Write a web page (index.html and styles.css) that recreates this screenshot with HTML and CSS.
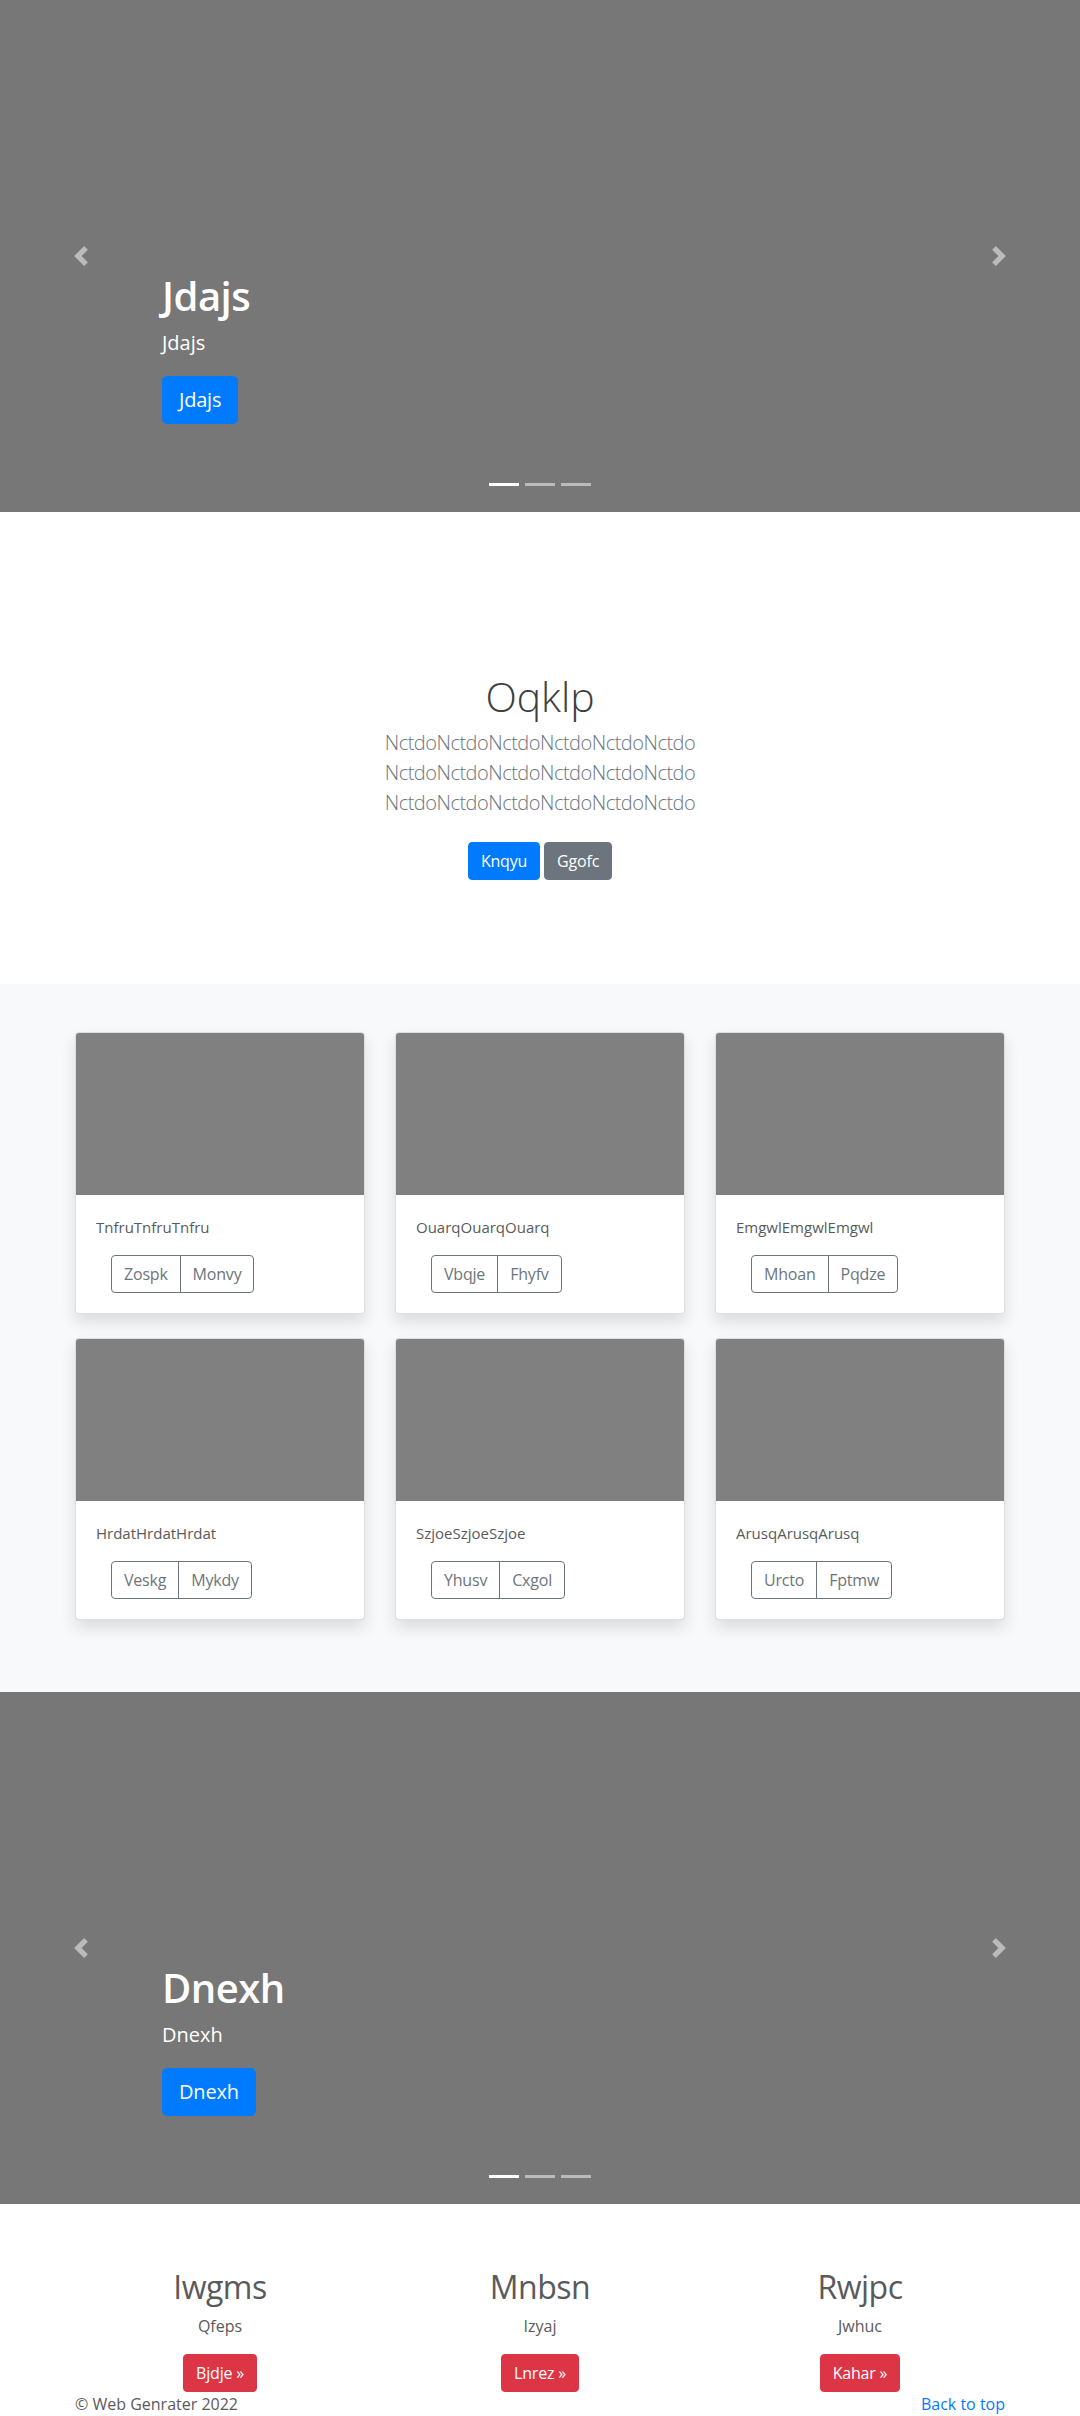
FILE: index.html
```html
<!DOCTYPE html>
<html lang="en">
<head>
<meta charset="utf-8">
<title>Web Genrater</title>
<link rel="stylesheet" href="styles.css">
</head>
<body>

<section class="carousel">
  <div class="slide">
    <h1 class="caption-title">Jdajs</h1>
    <p class="caption-text">Jdajs</p>
    <div><a class="btn btn-lg btn-primary" href="#">Jdajs</a></div>
  </div>
  <a class="ctrl ctrl-prev" href="#" aria-label="Previous">
    <svg viewBox="0 0 8 8" width="20" height="20"><path d="M5.25 0l-4 4 4 4 1.5-1.5L4.25 4l2.5-2.5L5.25 0z"/></svg>
  </a>
  <a class="ctrl ctrl-next" href="#" aria-label="Next">
    <svg viewBox="0 0 8 8" width="20" height="20"><path d="M2.75 0l-1.5 1.5L3.75 4l-2.5 2.5L2.75 8l4-4-4-4z"/></svg>
  </a>
  <ol class="indicators">
    <li class="active"></li><li></li><li></li>
  </ol>
</section>

<section class="jumbotron">
  <h1 class="jumbo-title">Oqklp</h1>
  <p class="lead">NctdoNctdoNctdoNctdoNctdoNctdo NctdoNctdoNctdoNctdoNctdoNctdo NctdoNctdoNctdoNctdoNctdoNctdo</p>
  <div class="jumbo-actions">
    <a class="btn btn-primary" href="#">Knqyu</a>
    <a class="btn btn-secondary" href="#">Ggofc</a>
  </div>
</section>

<section class="album">
  <div class="card-grid">
    <div class="card">
      <div class="card-img"></div>
      <div class="card-body">
        <p class="card-text">TnfruTnfruTnfru</p>
        <div class="btn-group"><a class="btn btn-outline" href="#">Zospk</a><a class="btn btn-outline" href="#">Monvy</a></div>
      </div>
    </div>
    <div class="card">
      <div class="card-img"></div>
      <div class="card-body">
        <p class="card-text">OuarqOuarqOuarq</p>
        <div class="btn-group"><a class="btn btn-outline" href="#">Vbqje</a><a class="btn btn-outline" href="#">Fhyfv</a></div>
      </div>
    </div>
    <div class="card">
      <div class="card-img"></div>
      <div class="card-body">
        <p class="card-text">EmgwlEmgwlEmgwl</p>
        <div class="btn-group"><a class="btn btn-outline" href="#">Mhoan</a><a class="btn btn-outline" href="#">Pqdze</a></div>
      </div>
    </div>
    <div class="card">
      <div class="card-img"></div>
      <div class="card-body">
        <p class="card-text">HrdatHrdatHrdat</p>
        <div class="btn-group"><a class="btn btn-outline" href="#">Veskg</a><a class="btn btn-outline" href="#">Mykdy</a></div>
      </div>
    </div>
    <div class="card">
      <div class="card-img"></div>
      <div class="card-body">
        <p class="card-text">SzjoeSzjoeSzjoe</p>
        <div class="btn-group"><a class="btn btn-outline" href="#">Yhusv</a><a class="btn btn-outline" href="#">Cxgol</a></div>
      </div>
    </div>
    <div class="card">
      <div class="card-img"></div>
      <div class="card-body">
        <p class="card-text">ArusqArusqArusq</p>
        <div class="btn-group"><a class="btn btn-outline" href="#">Urcto</a><a class="btn btn-outline" href="#">Fptmw</a></div>
      </div>
    </div>
  </div>
</section>

<section class="carousel">
  <div class="slide">
    <h1 class="caption-title">Dnexh</h1>
    <p class="caption-text">Dnexh</p>
    <div><a class="btn btn-lg btn-primary" href="#">Dnexh</a></div>
  </div>
  <a class="ctrl ctrl-prev" href="#" aria-label="Previous">
    <svg viewBox="0 0 8 8" width="20" height="20"><path d="M5.25 0l-4 4 4 4 1.5-1.5L4.25 4l2.5-2.5L5.25 0z"/></svg>
  </a>
  <a class="ctrl ctrl-next" href="#" aria-label="Next">
    <svg viewBox="0 0 8 8" width="20" height="20"><path d="M2.75 0l-1.5 1.5L3.75 4l-2.5 2.5L2.75 8l4-4-4-4z"/></svg>
  </a>
  <ol class="indicators">
    <li class="active"></li><li></li><li></li>
  </ol>
</section>

<section class="marketing">
  <div class="col">
    <h2>Iwgms</h2>
    <p>Qfeps</p>
    <a class="btn btn-danger" href="#">Bjdje &raquo;</a>
  </div>
  <div class="col">
    <h2>Mnbsn</h2>
    <p>Izyaj</p>
    <a class="btn btn-danger" href="#">Lnrez &raquo;</a>
  </div>
  <div class="col">
    <h2>Rwjpc</h2>
    <p>Jwhuc</p>
    <a class="btn btn-danger" href="#">Kahar &raquo;</a>
  </div>
</section>

<footer class="footer">
  <p>&copy; Web Genrater 2022</p>
  <a href="#" class="back-top">Back to top</a>
</footer>

</body>
</html>
```

FILE: styles.css
```css
* { box-sizing: border-box; }

html, body {
  margin: 0;
  padding: 0;
}

body {
  font-family: "Open Sans", "Noto Sans", "Liberation Sans", sans-serif;
  font-size: 16px;
  line-height: 1.5;
  color: #5a5a5a;
  background: #fff;
}

a { text-decoration: none; }

/* ---------- buttons ---------- */
.btn {
  display: inline-block;
  font-size: 16px;
  line-height: 24px;
  padding: 6px 12px;
  border: 1px solid transparent;
  border-radius: 4px;
  color: #fff;
  text-align: center;
  white-space: nowrap;
  letter-spacing: -0.2px;
}
.btn-lg {
  font-size: 20px;
  line-height: 30px;
  padding: 8px 16px;
  border-radius: 5px;
}
.btn-primary { background: #007bff; border-color: #007bff; }
.btn-secondary { background: #6c757d; border-color: #6c757d; }
.btn-danger { background: #dc3545; border-color: #dc3545; }
.btn-outline {
  color: #6c757d;
  background: transparent;
  border-color: #6c757d;
}

/* ---------- carousel ---------- */
.carousel {
  position: relative;
  height: 512px;
  background: #777;
  overflow: hidden;
}
.slide {
  height: 100%;
  display: flex;
  flex-direction: column;
  justify-content: flex-end;
  padding: 0 162px 88px;
  color: #fff;
}
.caption-title {
  margin: 0 0 8px;
  font-size: 40px;
  line-height: 48px;
  font-weight: 600;
  letter-spacing: -0.5px;
}
.caption-text {
  margin: 0 0 18px;
  font-size: 20px;
  line-height: 30px;
}
.ctrl {
  position: absolute;
  top: 246px;
  width: 20px;
  height: 20px;
  fill: #fff;
  opacity: 0.5;
}
.ctrl svg { display: block; }
.ctrl-prev { left: 71px; }
.ctrl-next { right: 71px; }
.indicators {
  position: absolute;
  left: 0;
  right: 0;
  bottom: 26px;
  margin: 0;
  padding: 0;
  list-style: none;
  display: flex;
  justify-content: center;
  gap: 6px;
}
.indicators li {
  width: 30px;
  height: 3px;
  background: rgba(255, 255, 255, 0.5);
}
.indicators li.active { background: #fff; }

/* ---------- jumbotron ---------- */
.jumbotron {
  padding: 160px 0 96px;
  text-align: center;
}
.jumbo-title {
  margin: 0 0 8px;
  font-size: 41px;
  line-height: 48px;
  font-weight: 300;
  color: #3e3e3e;
}
.lead {
  width: 450px;
  margin: 0 auto 16px;
  font-size: 20px;
  line-height: 30px;
  font-weight: 300;
  color: #6c757d;
  letter-spacing: -0.5px;
}
.jumbo-actions {
  display: flex;
  justify-content: center;
  gap: 4px;
  padding: 8px 0;
}

/* ---------- album ---------- */
.album {
  background: #f8f9fa;
  padding: 48px 0 72px;
}
.card-grid {
  width: 930px;
  margin: 0 auto;
  display: grid;
  grid-template-columns: repeat(3, 1fr);
  column-gap: 30px;
  row-gap: 24px;
}
.card {
  background: #fff;
  border: 1px solid rgba(0, 0, 0, 0.125);
  border-radius: 4px;
  box-shadow: 0 8px 16px rgba(0, 0, 0, 0.12);
  overflow: hidden;
}
.card-img {
  height: 162px;
  background: #808080;
}
.card-body {
  padding: 20px;
}
.card-text {
  margin: 0 0 16px;
  font-size: 15px;
  line-height: 24px;
}
.btn-group {
  display: inline-flex;
  margin-left: 15px;
}
.btn-group .btn { border-radius: 0; }
.btn-group .btn:first-child { border-radius: 4px 0 0 4px; }
.btn-group .btn + .btn { margin-left: -1px; border-radius: 0 4px 4px 0; }

/* ---------- marketing ---------- */
.marketing {
  width: 960px;
  margin: 0 auto;
  padding-top: 64px;
  display: grid;
  grid-template-columns: repeat(3, 1fr);
  text-align: center;
}
.marketing .col { padding: 0 15px; }
.marketing h2 {
  margin: 0 0 8px;
  font-size: 32px;
  line-height: 38px;
  font-weight: 500;
  letter-spacing: -0.5px;
}
.marketing p {
  margin: 0 0 16px;
}

/* ---------- footer ---------- */
.footer {
  width: 930px;
  margin: 0 auto;
  display: flex;
  justify-content: space-between;
  line-height: 24px;
}
.footer p { margin: 0; }
.back-top { color: #007bff; }
```
